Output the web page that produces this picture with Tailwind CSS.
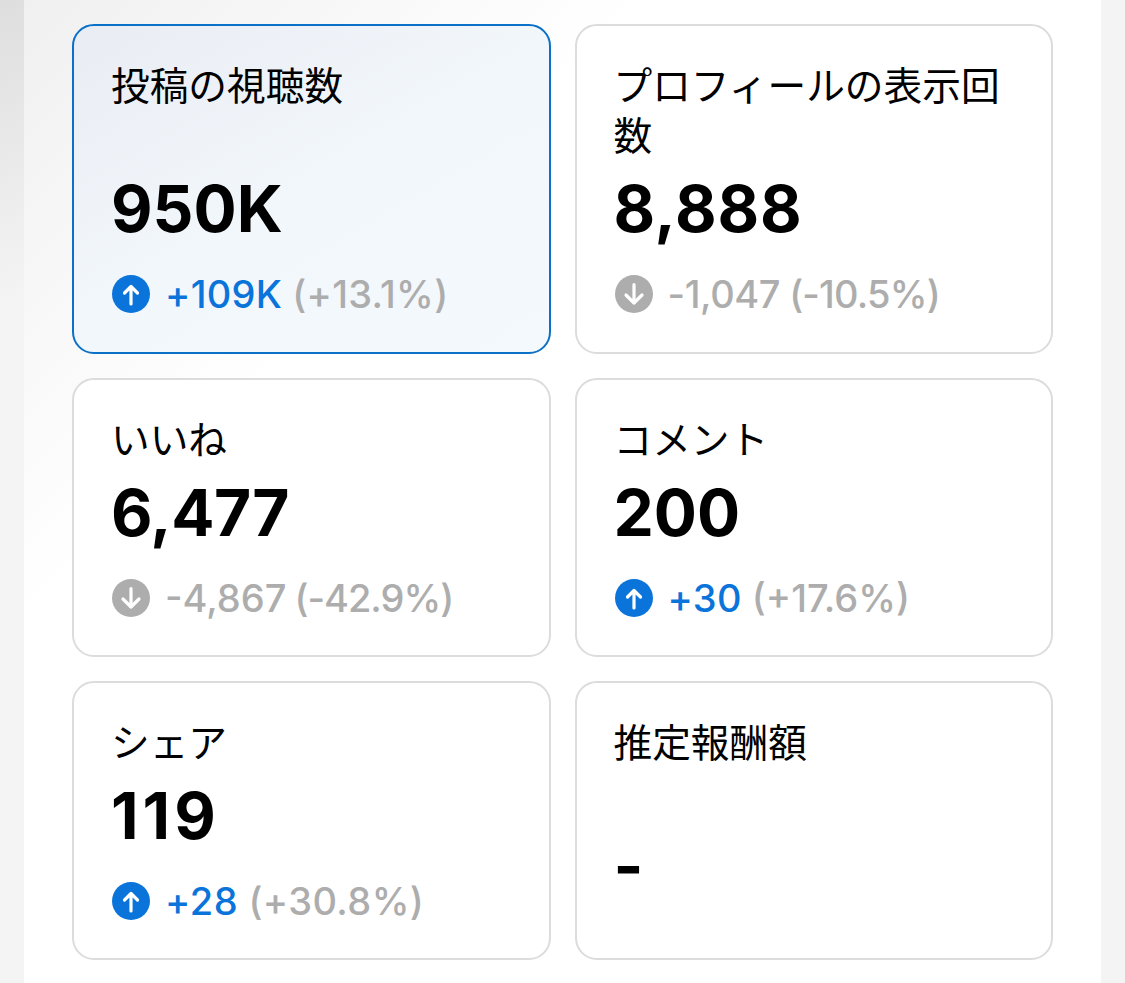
<!DOCTYPE html>
<html lang="ja">
<head>
  <meta charset="UTF-8">
  <title>インサイト</title>
  <script src="https://cdn.jsdelivr.net/npm/@tailwindcss/browser@4"></script>
</head>
<body class="w-[1125px] h-[983px] overflow-hidden bg-[#f4f4f4] font-['Inter','Noto_Sans_CJK_JP',sans-serif]">
  <div class="h-full bg-[linear-gradient(160deg,#dedede_0%,#f4f4f4_22%)]">
    <!-- white sheet -->
    <div class="ml-6 w-[1077px] h-full pt-[24px] px-12 bg-[linear-gradient(135deg,#f0f0f0_0%,#ffffff_30%)]">
      <div class="grid grid-cols-2 gap-x-6 gap-y-6 grid-rows-[330px_279px_279px]">

        <!-- selected card -->
        <div class="rounded-[22px] border-2 border-[#0a70c8] px-[38px] pt-[35px] bg-[linear-gradient(150deg,#e9edf3_0%,#f2f7fc_50%,#f4f9fe_100%)] flex flex-col">
          <div class="-ml-px text-[38.7px] leading-[50px] h-[100px] text-black">投稿の視聴数</div>
          <div class="-ml-px mt-[12px] text-[64px] leading-[72px] font-bold text-black">950K</div>
          <div class="mt-[27px] flex items-center text-[38px] leading-[44px] font-medium">
            <svg class="w-[38px] h-[38px] mr-[15px] shrink-0" viewBox="0 0 38 38"><circle cx="19" cy="19" r="19" fill="#0a74da"/><path d="M19 29V11.5M12.5 18L19 11.5l6.5 6.5" fill="none" stroke="#fff" stroke-width="3.2" stroke-linecap="round" stroke-linejoin="round"/></svg>
            <span class="text-[#0a74da] tracking-[0.3px]">+109K</span><span class="ml-[10px] text-[#adadad] tracking-[0.3px]">(+13.1%)</span>
          </div>
        </div>

        <div class="rounded-[22px] border-2 border-[#dcdcdc] bg-white px-[38px] pt-[35px] flex flex-col">
          <div class="-ml-px text-[38.7px] leading-[50px] h-[100px] text-black">プロフィールの表示回数</div>
          <div class="-ml-px mt-[12px] text-[64px] leading-[72px] font-bold tracking-[0.8px] text-black">8,888</div>
          <div class="mt-[27px] flex items-center text-[38px] leading-[44px] font-medium">
            <svg class="w-[38px] h-[38px] mr-[15px] shrink-0" viewBox="0 0 38 38"><circle cx="19" cy="19" r="19" fill="#adadad"/><path d="M19 9.5V28M11 20l8 8 8-8" fill="none" stroke="#fff" stroke-width="3.2" stroke-linecap="round" stroke-linejoin="round"/></svg>
            <span class="text-[#adadad] tracking-[-0.4px]">-1,047</span><span class="ml-[9px] text-[#adadad] tracking-[-0.8px]">(-10.5%)</span>
          </div>
        </div>

        <div class="rounded-[22px] border-2 border-[#dcdcdc] bg-white px-[38px] pt-[35px] flex flex-col">
          <div class="-ml-px text-[38.7px] leading-[50px] text-black">いいね</div>
          <div class="-ml-px mt-[12px] text-[64px] leading-[72px] font-bold tracking-[-0.4px] text-black">6,477</div>
          <div class="mt-[27px] flex items-center text-[38px] leading-[44px] font-medium">
            <svg class="w-[38px] h-[38px] mr-[15px] shrink-0" viewBox="0 0 38 38"><circle cx="19" cy="19" r="19" fill="#adadad"/><path d="M19 9.5V28M11 20l8 8 8-8" fill="none" stroke="#fff" stroke-width="3.2" stroke-linecap="round" stroke-linejoin="round"/></svg>
            <span class="text-[#adadad]">-4,867</span><span class="ml-[8px] text-[#adadad] tracking-[-1px]">(-42.9%)</span>
          </div>
        </div>

        <div class="rounded-[22px] border-2 border-[#dcdcdc] bg-white px-[38px] pt-[35px] flex flex-col">
          <div class="-ml-px text-[38.7px] leading-[50px] text-black">コメント</div>
          <div class="-ml-px mt-[12px] text-[64px] leading-[72px] font-bold text-black">200</div>
          <div class="mt-[27px] flex items-center text-[38px] leading-[44px] font-medium">
            <svg class="w-[38px] h-[38px] mr-[15px] shrink-0" viewBox="0 0 38 38"><circle cx="19" cy="19" r="19" fill="#0a74da"/><path d="M19 29V11.5M12.5 18L19 11.5l6.5 6.5" fill="none" stroke="#fff" stroke-width="3.2" stroke-linecap="round" stroke-linejoin="round"/></svg>
            <span class="text-[#0a74da] tracking-[0.3px]">+30</span><span class="ml-[10px] text-[#adadad]">(+17.6%)</span>
          </div>
        </div>

        <div class="rounded-[22px] border-2 border-[#dcdcdc] bg-white px-[38px] pt-[35px] flex flex-col">
          <div class="-ml-px text-[38.7px] leading-[50px] text-black">シェア</div>
          <div class="-ml-px mt-[12px] text-[64px] leading-[72px] font-bold tracking-[4px] text-black">119</div>
          <div class="mt-[27px] flex items-center text-[38px] leading-[44px] font-medium">
            <svg class="w-[38px] h-[38px] mr-[15px] shrink-0" viewBox="0 0 38 38"><circle cx="19" cy="19" r="19" fill="#0a74da"/><path d="M19 29V11.5M12.5 18L19 11.5l6.5 6.5" fill="none" stroke="#fff" stroke-width="3.2" stroke-linecap="round" stroke-linejoin="round"/></svg>
            <span class="text-[#0a74da] tracking-[0.6px]">+28</span><span class="ml-[10px] text-[#adadad] tracking-[0.4px]">(+30.8%)</span>
          </div>
        </div>

        <div class="rounded-[22px] border-2 border-[#dcdcdc] bg-white px-[38px] pt-[35px] flex flex-col">
          <div class="-ml-px text-[38.7px] leading-[50px] h-[100px] text-black">推定報酬額</div>
          <div class="-ml-px mt-[12px] text-[64px] leading-[72px] font-bold text-black">-</div>
        </div>

      </div>
    </div>
  </div>
</body>
</html>
